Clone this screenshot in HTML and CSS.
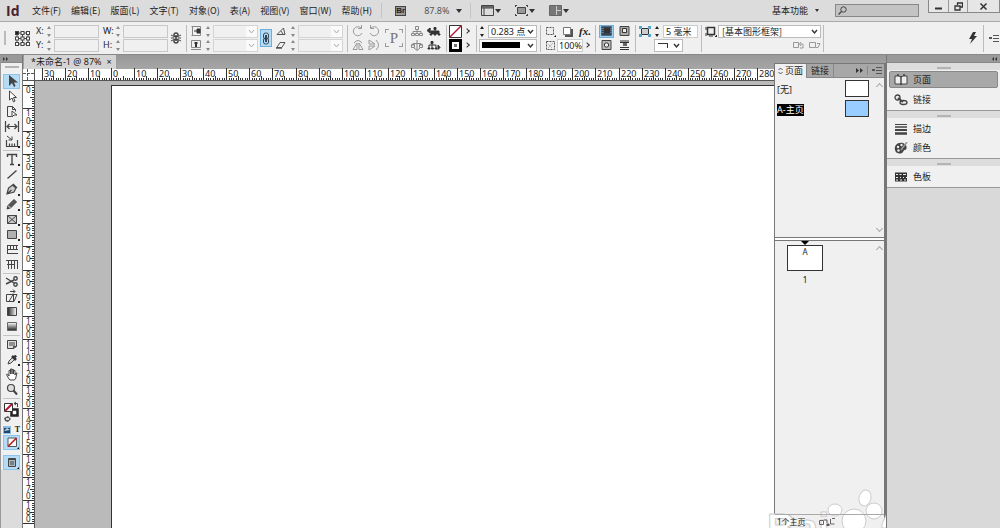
FILE: index.html
```html
<!DOCTYPE html>
<html lang="zh-CN">
<head>
<meta charset="utf-8">
<title>未命名-1</title>
<link rel="stylesheet" href="styles.css">
</head>
<body>
<header class="menubar">
  <span class="logo">Id</span>
  <nav class="menus">
    <button>文件(F)</button><button>编辑(E)</button><button>版面(L)</button><button>文字(T)</button><button>对象(O)</button><button>表(A)</button><button>视图(V)</button><button>窗口(W)</button><button>帮助(H)</button>
  </nav>
  <i class="vline"></i>
  <button class="bridge">Br</button>
  <button class="zoom-level">87.8% <span class="arrow"></span></button>
  <i class="vline"></i>
  <div class="view-buttons">
    <button aria-label="视图选项"><svg width="13" height="11"><path d="M.5 .5h12v10h-12zM.5 3h12M3 3v8" fill="none" stroke="#444"/><path d="M1 1h11v2H1z" fill="#666"/></svg><span class="arrow"></span></button>
    <button aria-label="屏幕模式"><svg width="13" height="11"><path d="M2.500 2.500h8v6h-8z" fill="#999" stroke="#444"/><path d="M0 .5h2m9 0h2M0 10.500h2m9 0h2M.5 0v2m12-2v2M.5 9v2m12-2v2" stroke="#444"/></svg><span class="arrow"></span></button>
    <button aria-label="排列文档"><svg width="13" height="11"><path d="M.5 .5h12v10h-12z" fill="#ccc" stroke="#666"/><path d="M1 1h6v9H1zM8 1h4v4H8zM8 6h4v4H8z" fill="#777"/></svg><span class="arrow"></span></button>
  </div>
  <button class="workspace-name">基本功能 <span class="arrow small"></span></button>
  <label class="search"><svg width="9" height="9"><circle cx="5.500" cy="3.500" r="2.700" fill="none" stroke="#444"/><path d="M3.500 5.500L.5 8.500" stroke="#444" stroke-width="1.300"/></svg><input type="text" aria-label="搜索"></label>
  <div class="window-buttons">
    <button aria-label="最小化"><svg width="9" height="9"><path d="M1 6.500h7" stroke="#333" stroke-width="2"/></svg></button>
    <button aria-label="还原"><svg width="9" height="9"><path d="M3.500 3V1h5v4H6M1 4h5v4H1z" fill="none" stroke="#333" stroke-width="1.300"/></svg></button>
    <button aria-label="关闭"><svg width="9" height="9"><path d="M1.500 1.500l6 6m0-6l-6 6" stroke="#333" stroke-width="1.500"/></svg></button>
  </div>
</header>

<section class="controls">
  <i class="grip-v"></i>
  <svg class="refpoint" width="15" height="15" fill="#fff" stroke="#444"><path d="M2 2h11M2 7.500h11M2 13h11M2 2v11M7.500 2v11M13 2v11"/><rect x=".5" y=".5" width="3" height="3" fill="#222"/><rect x="6" y=".5" width="3" height="3"/><rect x="11.500" y=".5" width="3" height="3"/><rect x=".5" y="6" width="3" height="3"/><rect x="6" y="6" width="3" height="3"/><rect x="11.500" y="6" width="3" height="3"/><rect x=".5" y="11.500" width="3" height="3"/><rect x="6" y="11.500" width="3" height="3"/><rect x="11.500" y="11.500" width="3" height="3"/></svg>
  <div class="grid xy">
    <label for="fx">X:</label><i class="spin"></i><input id="fx" type="text">
    <label for="fy">Y:</label><i class="spin"></i><input id="fy" type="text">
  </div>
  <div class="grid xy wh">
    <label for="fw">W:</label><i class="spin"></i><input id="fw" type="text">
    <label for="fh">H:</label><i class="spin"></i><input id="fh" type="text">
  </div>
  <button class="unlink" aria-label="约束宽高比例"><svg width="10" height="12" fill="none" stroke="#444"><path d="M3 4.500V3a2 2 0 014 0v1.500zM3 7.500V9a2 2 0 004 0V7.500zM5 3v6" stroke-width="1.500"/><path d="M0 3l2 1m8-1l-2 1M0 6h3m4 0h3M0 9l2-1m8 1l-2-1"/></svg></button>
  <i class="vsep"></i>
  <div class="grid scale">
    <svg width="10" height="10"><path d="M1.500 1v8M.5 .5h9v9h-9" fill="none" stroke="#888"/><path d="M6 3v4h3V3zM3 5h3" fill="#333" stroke="#333"/></svg><i class="spin"></i><select disabled aria-label="X 缩放百分比"></select>
    <svg width="10" height="10"><path d="M.5 .5h9v7h-9zM0 9.500h10" fill="none" stroke="#888"/><path d="M3.500 3h3M5 3v4" stroke="#333" stroke-width="2"/></svg><i class="spin"></i><select disabled aria-label="Y 缩放百分比"></select>
  </div>
  <button class="link-on" aria-label="约束缩放比例"><svg width="8" height="13" fill="none" stroke="#345"><rect x="1.500" y="1" width="5" height="6" rx="2"/><rect x="1.500" y="6" width="5" height="6" rx="2"/><path d="M4 3v7" stroke-width="2"/></svg></button>
  <div class="grid scale">
    <svg width="10" height="10" fill="none" stroke="#555"><path d="M1 8.500h8L7.500 2zM5 5l2 3"/></svg><i class="spin"></i><select disabled aria-label="旋转角度"></select>
    <svg width="10" height="10" fill="none" stroke="#555"><path d="M.8 7.500h5L9 2.500H4z"/><path d="M0 8h6" stroke-width="1.500"/></svg><i class="spin"></i><select disabled aria-label="X 切变角度"></select>
  </div>
  <i class="vsep"></i>
  <div class="grid rotate">
    <svg width="12" height="12" fill="none" stroke="#999"><path d="M10 8a4.500 4.500 0 11-1-5M9.500 0v3.500H6"/></svg>
    <svg width="12" height="12" fill="none" stroke="#999"><path d="M2 8a4.500 4.500 0 101-5M2.500 0v3.500H6"/></svg>
    <svg width="12" height="12" fill="none" stroke="#999"><path d="M1 10.500h4V4zM7 10.500h4L7 4zM2 4q4-5 8 0"/></svg>
    <svg width="12" height="12" fill="none" stroke="#999"><path d="M1 1v4h6zM1 11V7h6zM8 1q5 5 0 10"/></svg>
  </div>
  <span class="p-mark">P</span>
  <i class="vsep"></i>
  <div class="grid tree">
    <svg width="12" height="11" fill="none" stroke="#888"><path d="M6 3v4M2 8V5.500h8V8"/><path d="M4.500 .5h3v3h-3zM.5 7.500h3v2h-3zM4.500 7.500h3v2h-3zM8.500 7.500h3v2h-3z"/></svg>
    <svg width="14" height="11" fill="#333" stroke="#333"><path d="M4 8V5h8v3M8 3v5M3 2v5M0 4.500L3 2v5z"/><path d="M7 1.500h2v2H7zM3 8h2v1H3zM7 8h2v1H7zM11 8h2v1h-2z"/></svg>
    <svg width="12" height="11" fill="none" stroke="#888"><path d="M6 0v10M2 6V3.500h8V6M3 8l3 2.500L9 8"/><path d="M.5 4.500h3v3h-3zM8.500 4.500h3v3h-3z"/></svg>
    <svg width="14" height="11" fill="#333" stroke="#333"><path d="M2 8V5h7v3M5 3v5" fill="none"/><path d="M4 1.500h2v2H4zM1 8h2v1H1zM4.500 8h2v1h-2zM8 8h2v1H8zM11 5l2 2.500-2 2z"/></svg>
  </div>
  <i class="vsep"></i>
  <div class="grid swatches">
    <button aria-label="填色"><svg width="13" height="13"><path d="M.5 .5h12v12H.5z" fill="#fff" stroke="#333"/><path d="M1 12L12 1" stroke="#b01838" stroke-width="1.500"/></svg></button><span class="chev"></span>
    <button aria-label="描边"><svg width="13" height="13"><path d="M0 0h13v13H0z"/><path d="M4 4h5v5H4z" fill="#777" stroke="#fff" stroke-width="2"/></svg></button><span class="chev"></span>
  </div>
  <i class="vsep"></i>
  <div class="stack stroke">
    <div class="line"><i class="spin dark"></i><select class="on weight" aria-label="描边粗细"><option>0.283 点</option></select></div>
    <div class="line"><select class="on solid" aria-label="描边类型"></select></div>
  </div>
  <i class="vsep"></i>
  <div class="stack effects">
    <div class="line wide">
      <svg width="11" height="11"><path d="M1.500 1.500h7v7h-7z" fill="#eee" stroke="#555" stroke-dasharray="2 1"/><path d="M9 11h2V9z"/></svg>
      <svg width="11" height="11"><path d="M3 3h8v8H3z" fill="#555"/><path d="M1.500 1.500h7v7h-7z" fill="#fff" stroke="#777"/></svg>
      <span class="fx">fx.</span>
    </div>
    <div class="line">
      <svg width="11" height="11"><path d="M1.500 1.500h8v8h-8z" fill="#eee" stroke="#555" stroke-dasharray="2 1"/><path d="M3 8l5-5M3 4l4 4" stroke="#bbb"/></svg>
      <input class="on opacity" type="text" value="100%" aria-label="不透明度"><span class="chev"></span>
    </div>
  </div>
  <i class="vsep"></i>
  <div class="grid wrap">
    <button class="active" aria-label="无文本绕排"><svg width="11" height="10"><path d="M.5 .5h10v9H.5z" fill="#345" stroke="#567"/><path d="M0 2.500h11M0 4.500h11M0 6.500h11" stroke="#678"/><path d="M3 2h6v5H3z" fill="#333"/></svg></button>
    <button aria-label="沿定界框绕排"><svg width="11" height="10"><path d="M1 .5h9v9H1z" fill="#aaa" stroke="#444"/><path d="M3.500 2.500h4v4h-4z" fill="#eee" stroke="#333"/></svg></button>
    <button aria-label="沿对象形状绕排"><svg width="11" height="10"><path d="M1 .5h9v9H1z" fill="#bbb" stroke="#444"/><circle cx="5.500" cy="5" r="2.200" fill="#eee" stroke="#333"/></svg></button>
    <button aria-label="上下型绕排"><svg width="11" height="10"><path d="M1 1h9M1 2.500h9M1 7.500h9M1 9.500h9" stroke="#333"/><path d="M4 3h4v3H4z" fill="#666"/></svg></button>
  </div>
  <i class="vsep"></i>
  <div class="stack corner">
    <div class="line"><svg width="12" height="11"><path d="M2.500 2.500h7v6h-7z" fill="#ccc" stroke="#333"/><path d="M0 0h3v3H0zM9 0h3v3H9zM0 8h3v3H0zM9 8h3v3H9z" fill="#58a6d0"/></svg><i class="spin dark"></i><input class="on" type="text" value="5 毫米" aria-label="角大小"></div>
    <div class="line end"><select class="on shape" aria-label="角形状"></select></div>
  </div>
  <i class="vsep"></i>
  <div class="stack style">
    <div class="line"><svg width="12" height="11"><path d="M2.500 1.500h7v7h-7z" fill="#eee" stroke="#333" stroke-width="1.500"/><path d="M1 1v3M1 7v3M4 10h4M10 11h2V9z" stroke="#333"/></svg><select class="on" aria-label="对象样式"><option>[基本图形框架]</option></select></div>
    <div class="line tail"><svg width="12" height="8" fill="none" stroke="#999"><path d="M.5 1.500h5v5h-5zM7 3h3v4H7M8 1L6.500 3 8 5"/></svg><svg width="12" height="8" fill="none" stroke="#999"><path d="M.5 1.500h6v5h-6zM7 6.500h2l2-4H8"/></svg></div>
  </div>
  <i class="vsep"></i>
  <div class="quick">
    <svg width="10" height="12"><path d="M5 0L1 7h3L2 12l7-8H6l2-4z" fill="#333"/></svg>
    <i class="vsep"></i>
    <button class="flyout" aria-label="控制面板菜单"></button>
  </div>
</section>

<main class="work">
  <aside class="tools">
    <div class="dock-head"><svg width="6" height="4"><path d="M0 0l2 2-2 2zM3 0l2 2-2 2z" fill="#333"/></svg></div>
    <i class="grip"></i>
    <div class="tool-list">
      <button class="active" aria-label="选择工具"><svg viewBox="0 0 16 15"><path d="M5 1v11l3-3 2 4 1.500-1L10 8.500h4z" fill="#444"/></svg></button>
      <button aria-label="直接选择工具"><svg viewBox="0 0 16 15"><path d="M5.500 2v9l2.500-2 1.500 4 1.500-1-1.500-3.500h3z" fill="#fff" stroke="#444"/></svg></button>
      <button aria-label="页面工具"><svg viewBox="0 0 16 15"><path d="M3.500 2.500h5l3 3v2M3.500 2.500v10h4M8.500 2.500v3h3" fill="none" stroke="#444"/><path d="M8 7v6l2-2h3z" fill="#fff" stroke="#444"/></svg></button>
      <button aria-label="间隙工具"><svg viewBox="0 0 16 15"><path d="M1.500 2v11M14.500 2v11M3 7.500h10M5.500 5L3 7.500 5.500 10M10.500 5L13 7.500 10.500 10" fill="none" stroke="#444" stroke-width="1.200"/></svg></button>
      <button class="more" aria-label="内容收集器工具"><svg viewBox="0 0 16 15"><path d="M2.500 6v6.500h11V6M5.500 12V9.500M8 12V9.500M10.500 12V9.500" fill="none" stroke="#444" stroke-width="1.200"/><path d="M3 2l5 4M8 2.500V6H4.500" fill="none" stroke="#444"/></svg></button>
      <hr>
      <button class="more" aria-label="文字工具"><svg viewBox="0 0 16 15"><path d="M3.500 5V2.500h9V5M8 2.500v10M6 12.500h4" fill="none" stroke="#444" stroke-width="1.400"/></svg></button>
      <button aria-label="直线工具"><svg viewBox="0 0 16 15"><path d="M3.500 11.500l9-8" stroke="#444" stroke-width="1.400"/></svg></button>
      <button class="more" aria-label="钢笔工具"><svg viewBox="0 0 16 15"><path d="M3 12l1.500-6 4-3 3.500 3-2 4zM3 12l4.500-4M9 2l4 4" fill="#ccc" stroke="#444" stroke-width="1.200"/></svg></button>
      <button class="more" aria-label="铅笔工具"><svg viewBox="0 0 16 15"><path d="M3 12l1-3.500 6-6L12.500 5l-6 6z" fill="#555" stroke="#444"/><path d="M4 8.500L6.500 11" stroke="#eee"/></svg></button>
      <button class="more" aria-label="矩形框架工具"><svg viewBox="0 0 16 15"><path d="M3.500 3.500h9v8h-9zM3.500 3.500l9 8m0-8l-9 8" fill="#ccc" stroke="#444"/></svg></button>
      <button class="more" aria-label="矩形工具"><svg viewBox="0 0 16 15"><path d="M3.500 3.500h9v8h-9z" fill="#b0b0b0" stroke="#444"/></svg></button>
      <button aria-label="水平网格工具"><svg viewBox="0 0 16 15"><path d="M3 3.500h11M3 7.500h11M3 11.500h11M3.500 3v9M6.500 3v5M9.500 3v5M12.500 3v5" fill="none" stroke="#444"/></svg></button>
      <button aria-label="垂直网格工具"><svg viewBox="0 0 16 15"><path d="M2 3.500h12M4.500 3v9M7.500 3v9M10.500 3v9M13.500 3v9M3 7.500h7" fill="none" stroke="#444"/></svg></button>
      <hr class="thin">
      <button aria-label="剪刀工具"><svg viewBox="0 0 16 15" fill="none" stroke="#444" stroke-width="1.400"><path d="M2 4l8 5M2 10l8-4"/><circle cx="11.500" cy="4.500" r="1.700"/><circle cx="11.500" cy="10.500" r="1.700"/></svg></button>
      <button class="more" aria-label="自由变换工具"><svg viewBox="0 0 16 15" fill="none" stroke="#444"><path d="M2.500 5.500h7v7h-7zM5 12.500l4-7h4l-3 7zM6 2.500h5M9 .5l2 2-2 2"/></svg></button>
      <button aria-label="渐变色板工具"><svg viewBox="0 0 16 15"><defs><linearGradient id="ga"><stop stop-color="#222"/><stop offset="1" stop-color="#fff"/></linearGradient></defs><path d="M3.500 3.500h9v8h-9z" fill="url(#ga)" stroke="#444"/></svg></button>
      <button aria-label="渐变羽化工具"><svg viewBox="0 0 16 15"><defs><linearGradient id="gb" x2="0" y2="1"><stop stop-color="#fff"/><stop offset="1" stop-color="#222"/></linearGradient></defs><path d="M3.500 3.500h9v8h-9z" fill="url(#gb)" stroke="#666"/></svg></button>
      <hr>
      <button aria-label="附注工具"><svg viewBox="0 0 16 15"><path d="M3.500 3.500h9v6l-3 2h-6zM5 6h6M5 8h6M9.500 11.500v-2h3" fill="#ddd" stroke="#444"/></svg></button>
      <button class="more" aria-label="吸管工具"><svg viewBox="0 0 16 15"><path d="M4 12l1-3 4-4 2 2-4 4z" fill="#ddd" stroke="#444"/><path d="M8 4l4 4M10 6l2-2.500" stroke="#333" stroke-width="2.500"/></svg></button>
      <button aria-label="抓手工具"><svg viewBox="0 0 16 15"><path d="M5 12L2.500 7.500l1-.5L5 9V3.500h1.500V7 2H8v5-4.500h1.500V7 3.500H11V8l1-2h1l-1.500 6L10 13H6z" fill="#fff" stroke="#444"/></svg></button>
      <button aria-label="缩放工具"><svg viewBox="0 0 16 15"><circle cx="7" cy="6" r="3.500" fill="#ddd" stroke="#444" stroke-width="1.200"/><path d="M9.500 8.500L13 12.500" stroke="#444" stroke-width="2"/></svg></button>
      <hr>
    </div>
    <button class="fill-stroke" aria-label="填色和描边"><svg width="17" height="22"><path d="M8.500 8.500h6v6h-6z" fill="#fff" stroke="#222" stroke-width="2.500"/><path d="M1.500 2.500h8v8h-8z" fill="#fff" stroke="#333"/><path d="M2 10l7-7" stroke="#b01838" stroke-width="2"/><path d="M11 2.500h3.500V6M13 1l-2 1.500L13 4" fill="none" stroke="#444"/><path d="M1 17l4-2 3 3-3 3-3-1z" fill="#555"/><path d="M3 17h3v2H3z" fill="#ddd"/></svg></button>
    <div class="format-row"><button aria-label="格式针对容器"><svg width="8" height="8"><path d="M0 0h8v8H0z" fill="#8cbce0"/><path d="M1 2h6v5H1z" fill="#246"/><path d="M1 5l3-3 3 2" fill="#bde"/></svg></button><button class="fmt-t">T</button></div>
    <button class="big-tool" aria-label="应用无"><svg viewBox="0 0 16 15"><path d="M4 3h8.500v8.500H4z" fill="#fff" stroke="#555"/><path d="M4 11.500L12.500 3" stroke="#c02020" stroke-width="1.700"/><path d="M13 14h2v-2z"/></svg></button>
    <button class="big-tool" aria-label="屏幕模式"><svg viewBox="0 0 16 15"><path d="M4.500 3.500h7v8h-7z" fill="#aab8c4" stroke="#444"/><path d="M4 4.500h8M6 7h4M6 9h4" stroke="#444" stroke-width="1.200"/><path d="M13 14h2v-2z"/></svg></button>
    <div class="tools-rest"></div>
  </aside>

  <section class="document">
    <div class="tabbar"><div class="doc-tab"><span>*未命名-1 @ 87%</span><button aria-label="关闭文档">×</button></div></div>
    <div class="ruler-row"><svg class="origin" width="12" height="12"><path d="M0 4.500h12M4.500 0v12" stroke="#555" stroke-dasharray="3 1"/></svg><svg class="ruler-h" id="ruler-h"></svg></div>
    <div class="canvas-row">
      <svg class="ruler-v" id="ruler-v"></svg>
      <div class="pasteboard"><div class="page"></div></div>
    </div>

    <section class="pages-panel">
      <div class="panel-tabs">
        <button class="active"><svg width="5" height="8" fill="none" stroke="#555"><path d="M.5 3l2-2 2 2M.5 5l2 2 2-2"/></svg>页面</button><button>链接</button>
        <span class="panel-icons"><svg width="7" height="5"><path d="M0 0l3 2.500L0 5zM4 0l3 2.500L4 5z" fill="#333"/></svg><i></i><button class="flyout" aria-label="面板菜单"></button></span>
      </div>
      <div class="masters">
        <div class="master"><span>[无]</span><i class="thumb"></i></div>
        <div class="master"><span class="selected">A-主页</span><i class="thumb blue"></i></div>
        <span class="sb up"></span><span class="sb down"></span>
      </div>
      <div class="splitter"></div>
      <div class="page-list">
        <figure><i class="marker"></i><div class="sheet">A</div><figcaption>1</figcaption></figure>
        <span class="sb up"></span>
      </div>
      <footer>1个主页 <svg width="26" height="9" fill="none" stroke="#666"><path d="M10.500 3.500h4v4h-4zM15 3h3v3M23 1.500h3M21.500 2v5h4"/><path d="M18 7h2v2h-2z" fill="#222"/></svg></footer>
    </section>

    <svg class="watermark" width="130" height="44" fill="#fff" stroke="#ccc" stroke-width="1"><text x="1" y="58">Bai</text><ellipse cx="69" cy="26" rx="7" ry="6"/><ellipse cx="99" cy="14" rx="6" ry="8" transform="rotate(15 99 14)"/><ellipse cx="108" cy="27" rx="8" ry="8"/><ellipse cx="88" cy="37" rx="12" ry="12"/><path d="M116 40l6-13 4 1-4 9 6-4v11h-12z"/></svg>
  </section>

  <aside class="dock">
    <div class="dock-head right"><svg width="6" height="4"><path d="M2 0L0 2l2 2zM5 0L3 2l2 2z" fill="#333"/></svg></div>
    <div class="dock-group">
      <i class="grip"></i>
      <button class="active"><svg width="14" height="12"><path d="M1 2h4l2 1 2-1h4v8H1z" fill="#eee" stroke="#444"/><path d="M7 2v9M4 2V0M10 2V0" stroke="#333" stroke-width="1.300"/></svg>页面</button>
      <button><svg width="14" height="12" fill="none" stroke="#444" stroke-width="1.300"><circle cx="3.500" cy="3.500" r="2.500"/><ellipse cx="9.500" cy="8.500" rx="3.500" ry="2"/><path d="M4 4l5 4" stroke-width="2"/></svg>链接</button>
    </div>
    <div class="dock-group">
      <i class="grip"></i>
      <button><svg width="14" height="12" stroke="#444"><path d="M1 1.500h12"/><path d="M1 4h12" stroke-width="1.500"/><path d="M1 7h12" stroke-width="2"/><path d="M1 10.500h12" stroke-width="2.500"/></svg>描边</button>
      <button><svg width="14" height="12"><path d="M9 1C3 0 0 4 1 8s5 4 7 3 1-3 3-3 3-5-2-7z" fill="#444"/><circle cx="4" cy="5" r="1.200" fill="#eee"/><circle cx="7.500" cy="3" r="1.200" fill="#eee"/><circle cx="4.500" cy="8.500" r="1.200" fill="#eee"/><path d="M13 0L7 8" stroke="#999" stroke-width="1.500"/></svg>颜色</button>
    </div>
    <div class="dock-group">
      <i class="grip"></i>
      <button><svg width="14" height="12"><path d="M1 1.500h12v9H1z" fill="#333"/><path d="M2 3h2v1H2zM9 3h3v1H9zM2 6h2v1H2zM6 6h1v1H6zM9 6h1v1H9zM12 6h1v1h-1zM2 8.500h2v1H2zM6 8.500h2v1H6zM10 8.500h2v1h-2zM5.500 3h2v1h-2z" fill="#eee"/></svg>色板</button>
    </div>
  </aside>
</main>
<script src="rulers.js"></script>
</body>
</html>
```
FILE: styles.css
```css
* { box-sizing: border-box; }
body {
  margin: 0;
  height: 100vh;
  display: flex;
  flex-direction: column;
  overflow: hidden;
  background: #d9d9d9;
  color: #222;
  font: 9px/12px "Noto Sans", "Noto Sans CJK SC", sans-serif;
}
button, input, select { font: inherit; color: inherit; margin: 0; padding: 0; border: 0; background: none; border-radius: 0; min-width: 0; }
button { display: inline-flex; align-items: center; white-space: nowrap; }
svg { display: block; flex: none; }
i { display: block; flex: none; }

.menubar { display: flex; align-items: center; height: 22px; flex: none; background: #dcdcdc; border-bottom: 1px solid #aaa; padding-left: 6px; }
.logo { width: 26px; font: bold 14px/20px "Open Sans", sans-serif; color: #4c2030; }
.menus { display: flex; gap: 10px; margin-right: 9px; font-family: "Noto Sans CJK SC", sans-serif; }
.vline { width: 1px; height: 15px; background: #c4c4c4; }
.bridge { margin-left: 13px; width: 11px; height: 10px; justify-content: center; background: #999; border: 1px solid #444; font: bold 8px/8px "Liberation Sans", sans-serif; color: #222; }
.zoom-level { margin: 0 8px 0 18px; gap: 6px; color: #555; }
.arrow { display: inline-block; border: 3px solid transparent; border-top: 4px solid #333; border-bottom: 0; }
.arrow.small { border-width: 2px; border-top-width: 3px; }
.view-buttons { display: flex; gap: 14px; margin-left: 10px; }
.view-buttons button { gap: 1px; }
.workspace-name { margin-left: auto; gap: 7px; font-family: "Noto Sans CJK SC", sans-serif; }
.search { display: flex; align-items: center; width: 84px; height: 13px; margin: 0 9px 0 16px; padding-left: 2px; background: #c3c3c3; border: 1px solid #888; }
.search input { flex: 1; height: 10px; outline: 0; }
.window-buttons { display: flex; align-self: flex-start; height: 13px; border: 1px solid #888; border-top: 0; background: #e6e6e6; }
.window-buttons button { width: 19px; justify-content: center; }
.window-buttons button + button { border-left: 1px solid #999; }
.window-buttons button:last-child { width: 32px; }

.controls { display: flex; align-items: center; height: 33px; flex: none; background: #f0f0f0; border-bottom: 1px solid #888; padding-left: 4px; }
.grip-v { width: 2px; height: 14px; background: #bbb; }
.refpoint { margin: 0 6px 0 9px; }
.vsep { width: 1px; height: 27px; background: #bbb; }
.grid { display: grid; grid-template-rows: 13px 13px; row-gap: 1px; align-items: center; }
.xy { grid-template-columns: 11px 7px 45px; }
.wh { grid-template-columns: 13px 7px 45px; margin-left: 4px; }
.controls input { width: 100%; height: 13px; border: 1px solid #c8c8c8; background: #f0f0f0; padding: 0 2px; outline: 0; }
.controls select { appearance: none; width: 100%; height: 13px; padding: 0 12px 0 3px; line-height: 11px; border: 1px solid #d4d4d4; border-radius: 0; opacity: 1; background: #f0f0f0 url("data:image/svg+xml,%3Csvg xmlns='http://www.w3.org/2000/svg' width='11' height='11'%3E%3Cpath fill='%23fafafa' d='M0 0h11v11H0z'/%3E%3Cpath d='M3 4l2.500 3L8 4' fill='none' stroke='%23aaa'/%3E%3C/svg%3E") no-repeat right center; }
.controls input.on { background: #fff; border-color: #ccc; }
.controls select.on { border-color: #bbb; background: #fff url("data:image/svg+xml,%3Csvg xmlns='http://www.w3.org/2000/svg' width='11' height='11'%3E%3Cpath d='M3 4l2.500 3L8 4' fill='none' stroke='%23333' stroke-width='1.400'/%3E%3C/svg%3E") no-repeat right center; }
.spin { position: relative; width: 5px; height: 11px; }
.spin::before, .spin::after { content: ""; position: absolute; left: 0; border: 2px solid transparent; }
.spin::before { top: 0; border-top: 0; border-bottom: 3px solid #888; }
.spin::after { bottom: 0; border-bottom: 0; border-top: 3px solid #888; }
.spin.dark::before { border-bottom-color: #222; }
.spin.dark::after { border-top-color: #222; }
.unlink { margin: 0 5px 0 3px; }
.scale { grid-template-columns: 15px 7px 45px; margin-left: 4px; }
.scale + .vsep { margin-left: 4px; }
.link-on { width: 12px; height: 18px; margin-left: 2px; justify-content: center; background: #b4dcf6; border: 1px solid #6caedc; }
.rotate { grid-template-columns: 16px 12px; margin-left: 4px; }
.p-mark { width: 18px; height: 18px; margin: 0 2px 0 5px; font: 15px/18px "Liberation Serif", serif; text-align: center; color: #777; background: linear-gradient(#999, #999) 0 0 / 4px 1px, linear-gradient(#999, #999) 0 0 / 1px 4px, linear-gradient(#999, #999) 100% 0 / 4px 1px, linear-gradient(#999, #999) 100% 0 / 1px 4px, linear-gradient(#999, #999) 0 100% / 4px 1px, linear-gradient(#999, #999) 0 100% / 1px 4px, linear-gradient(#999, #999) 100% 100% / 4px 1px, linear-gradient(#999, #999) 100% 100% / 1px 4px; background-repeat: no-repeat; }
.tree { grid-template-columns: 16px 14px; margin: 0 5px; }
.swatches { grid-template-columns: 16px 7px; margin: 0 4px 0 2px; }
.chev { width: 4px; height: 4px; border: solid #333; border-width: 1px 1px 0 0; transform: rotate(45deg); }
.stack { display: flex; flex-direction: column; gap: 1px; }
.line { display: flex; align-items: center; height: 13px; }
.stroke { width: 58px; margin: 0 3px 0 2px; }
.stroke .spin { margin: 0 3px 0 1px; }
.controls .weight { padding: 0 8px 0 2px; }
.controls select.solid { background-image: linear-gradient(#000, #000), url("data:image/svg+xml,%3Csvg xmlns='http://www.w3.org/2000/svg' width='11' height='11'%3E%3Cpath d='M3 4l2.500 3L8 4' fill='none' stroke='%23333' stroke-width='1.400'/%3E%3C/svg%3E"); background-size: 38px 6px, 11px 11px; background-position: 2px center, right center; }
.effects { width: 46px; margin: 0 4px; }
.wide { justify-content: space-between; }
.fx { font: italic bold 11px/12px "Liberation Serif", serif; }
.controls .opacity { width: 26px; margin: 0 2px 0 1px; padding: 0 0 0 1px; }
.wrap { grid-template-columns: 15px 15px; column-gap: 3px; margin: 0 3px; }
.wrap button { height: 13px; justify-content: center; }
.wrap .active { background: #9fd0f2; border: 1px solid #6caedc; }
.corner { width: 59px; margin: 0 3px; }
.corner .spin { margin: 0 3px 0 4px; }
.corner .end { padding: 0 15px; }
.controls select.shape { background-image: linear-gradient(#333, #333), linear-gradient(#333, #333), url("data:image/svg+xml,%3Csvg xmlns='http://www.w3.org/2000/svg' width='11' height='11'%3E%3Cpath d='M3 4l2.500 3L8 4' fill='none' stroke='%23333' stroke-width='1.400'/%3E%3C/svg%3E"); background-size: 10px 1px, 1px 5px, 11px 11px; background-position: 3px 3px, 12px 3px, right center; }
.style { width: 116px; margin: 0 2px 0 3px; }
.style select { margin-left: 1px; font-family: "Noto Sans CJK SC", sans-serif; }
.tail { justify-content: flex-end; gap: 4px; }
.quick { display: flex; align-items: center; gap: 5px; margin-left: auto; padding-right: 1px; }
.flyout { width: 10px; height: 7px; background: linear-gradient(#555, #555) 4px 0 / 6px 1px, linear-gradient(#555, #555) 4px 3px / 6px 1px, linear-gradient(#555, #555) 4px 6px / 6px 1px, linear-gradient(#555, #555) 0 2px / 3px 2px; background-repeat: no-repeat; }

.work { flex: 1; min-height: 0; display: flex; }
.tools { width: 23px; flex: none; display: flex; flex-direction: column; align-items: center; background: #f0f0f0; border-left: 1px solid #999; border-right: 1px solid #777; }
.dock-head { width: 100%; height: 8px; flex: none; display: flex; align-items: center; padding: 0 2px; background: #999; border-bottom: 1px solid #888; }
.dock-head.right { justify-content: flex-end; }
.grip { width: 14px; height: 2px; margin: 3px auto 2px; background: #b4b4b4; }
.tools .grip { margin-bottom: 6px; }
.tool-list { width: 17px; }
.tool-list button, .big-tool { position: relative; display: flex; width: 17px; height: 15px; justify-content: center; }
.tool-list svg, .big-tool svg { width: 16px; height: 15px; }
.tool-list .active, .big-tool { background: #b4dcf6; border: 1px solid #8cc4ea; }
.more::after { content: ""; position: absolute; right: 0; bottom: 1px; border: 1px solid #222; }
.tool-list hr { height: 1px; margin: 1px 0; border: 0; background: #c4c4c4; }
.tool-list hr.thin { margin-bottom: 0; }
.fill-stroke { margin-top: 1px; }
.format-row { display: flex; gap: 4px; height: 12px; padding-top: 2px; }
.fmt-t { font: bold 8px/8px "Liberation Serif", serif; }
.big-tool { flex: none; margin-bottom: 5px; }
.big-tool + .big-tool { margin-bottom: 0; }
.tools-rest { flex: 1; width: 100%; background: #dcdcdc; }

.document { position: relative; flex: 1; min-width: 0; display: flex; flex-direction: column; overflow: hidden; }
.tabbar { height: 14px; flex: none; background: linear-gradient(#989898, #a6a6a6); padding-left: 1px; }
.doc-tab { display: inline-flex; align-items: center; gap: 5px; height: 14px; padding: 0 4px 0 7px; background: #d4d4d4; }
.ruler-row { display: flex; height: 12px; flex: none; padding-right: 111px; background: #fff; border-bottom: 1px solid #555; }
.origin { border-right: 1px solid #555; }
.ruler-h { flex: 1; min-width: 0; height: 11px; overflow: visible; }
.ruler-h text, .ruler-v text { font: 9px "Noto Sans", sans-serif; fill: #222; }
.ruler-v text { font-size: 8px; }
.canvas-row { display: flex; flex: 1; min-height: 0; }
.ruler-v { width: 12px; height: 100%; background: #fff; border-right: 1px solid #555; }
.pasteboard { flex: 1; min-width: 0; padding: 4px 0 0 76px; background: #bababa; }
.page { height: 100%; background: #fff; border: solid #333; border-width: 1px 0 0 1px; }

.pages-panel { position: absolute; top: 8px; right: 0; bottom: 0; width: 112px; display: flex; flex-direction: column; background: #f0f0f0; border: solid #777; border-width: 1px 2px 0 1px; }
.panel-tabs { display: flex; height: 14px; flex: none; background: #a8a8a8; border-bottom: 1px solid #888; }
.panel-tabs > button { padding: 0 4px; gap: 2px; border-right: 1px solid #888; }
.panel-tabs > .active { padding: 0 3px; background: #f0f0f0; height: 14px; }
.panel-icons { display: flex; align-items: center; gap: 4px; margin-left: auto; padding-right: 2px; }
.panel-icons i { width: 1px; height: 9px; background: #888; }
.masters { position: relative; height: 159px; flex: none; }
.master { display: flex; align-items: center; justify-content: space-between; height: 20px; padding: 0 15px 0 2px; }
.master span { margin-top: 4px; }
.selected { background: #000; color: #fff; }
.thumb { width: 24px; height: 17px; background: #fff; border: 1px solid #333; }
.thumb.blue { background: #9cf; }
.sb { position: absolute; right: 2px; width: 5px; height: 5px; border: solid #aaa; border-width: 1px 0 0 1px; }
.sb.up { top: 6px; transform: rotate(45deg); }
.sb.down { bottom: 6px; transform: rotate(225deg); }
.splitter { height: 4px; flex: none; border: solid #777; border-width: 1px 0; background: #fff; }
.page-list { position: relative; flex: 1; min-height: 0; }
.page-list figure { width: 36px; margin: 0 0 0 12px; display: flex; flex-direction: column; align-items: center; }
.marker { border: 4px solid transparent; border-top-color: #000; border-bottom: 0; }
.sheet { width: 36px; height: 26px; text-align: center; background: #fff; border: 1px solid #333; font-size: 8px; line-height: 11px; }
.page-list figcaption { margin-top: 3px; }
.pages-panel footer { position: relative; z-index: 1; display: flex; align-items: center; gap: 3px; height: 14px; padding-left: 2px; border-top: 1px solid #aaa; font-size: 8px; }
.watermark { position: absolute; right: -10px; bottom: 0; }
.watermark text { font: bold 40px "Liberation Sans", sans-serif; }

.dock { width: 114px; flex: none; border-left: 1px solid #777; background: #d9d9d9; }
.dock-group { padding: 1px 2px; background: linear-gradient(#ddd 7px, #f0f0f0 7px); border-bottom: 1px solid #999; }
.dock-group button { display: flex; width: 100%; height: 19px; padding-left: 5px; gap: 5px; font-family: "Noto Sans CJK SC", sans-serif; }
.dock-group .active { height: 17px; margin: 0 0 2px; background: #a8a8a8; border: 1px solid #888; border-radius: 2px; padding-left: 4px; }
```
FILE: rulers.js
```js
const NS = "http://www.w3.org/2000/svg";
const STEP = 23.07;

function add(parent, name, attrs, text) {
  const el = document.createElementNS(NS, name);
  for (const key in attrs) el.setAttribute(key, attrs[key]);
  if (text !== undefined) el.textContent = text;
  parent.appendChild(el);
}

function ticks(zero, count, first, line) {
  let d = "";
  for (let n = first * 10; n <= count * 10; n++) {
    const pos = Math.round(zero + n * STEP / 10);
    const size = n % 10 === 0 ? 12 : n % 5 === 0 ? 4 : 2;
    if (pos >= 0) d += line(pos + 0.5, size);
  }
  return d;
}

function drawHorizontal() {
  const svg = document.getElementById("ruler-h");
  const zero = 76;
  const count = Math.floor((svg.clientWidth - zero - 16) / STEP);
  add(svg, "path", { stroke: "#333", d: ticks(zero, count, -3, (p, s) => `M${p} 11V${11 - s}`) });
  for (let n = -3; n <= count; n++) {
    add(svg, "text", { x: Math.round(zero + n * STEP) + 2, y: 8 }, Math.abs(n * 10));
  }
}

function drawVertical() {
  const svg = document.getElementById("ruler-v");
  const zero = 4;
  const count = Math.floor((svg.clientHeight - zero - 20) / STEP);
  add(svg, "path", { stroke: "#333", d: ticks(zero, count + 1, 0, (p, s) => `M11 ${p}H${11 - s}`) });
  for (let n = 0; n <= count; n++) {
    const digits = [...String(n * 10)];
    const pitch = digits.length > 2 ? 7 : 8;
    digits.forEach((digit, i) => {
      add(svg, "text", { x: 3, y: Math.round(zero + n * STEP) + 8 + i * pitch }, digit);
    });
  }
}

drawHorizontal();
drawVertical();
```
